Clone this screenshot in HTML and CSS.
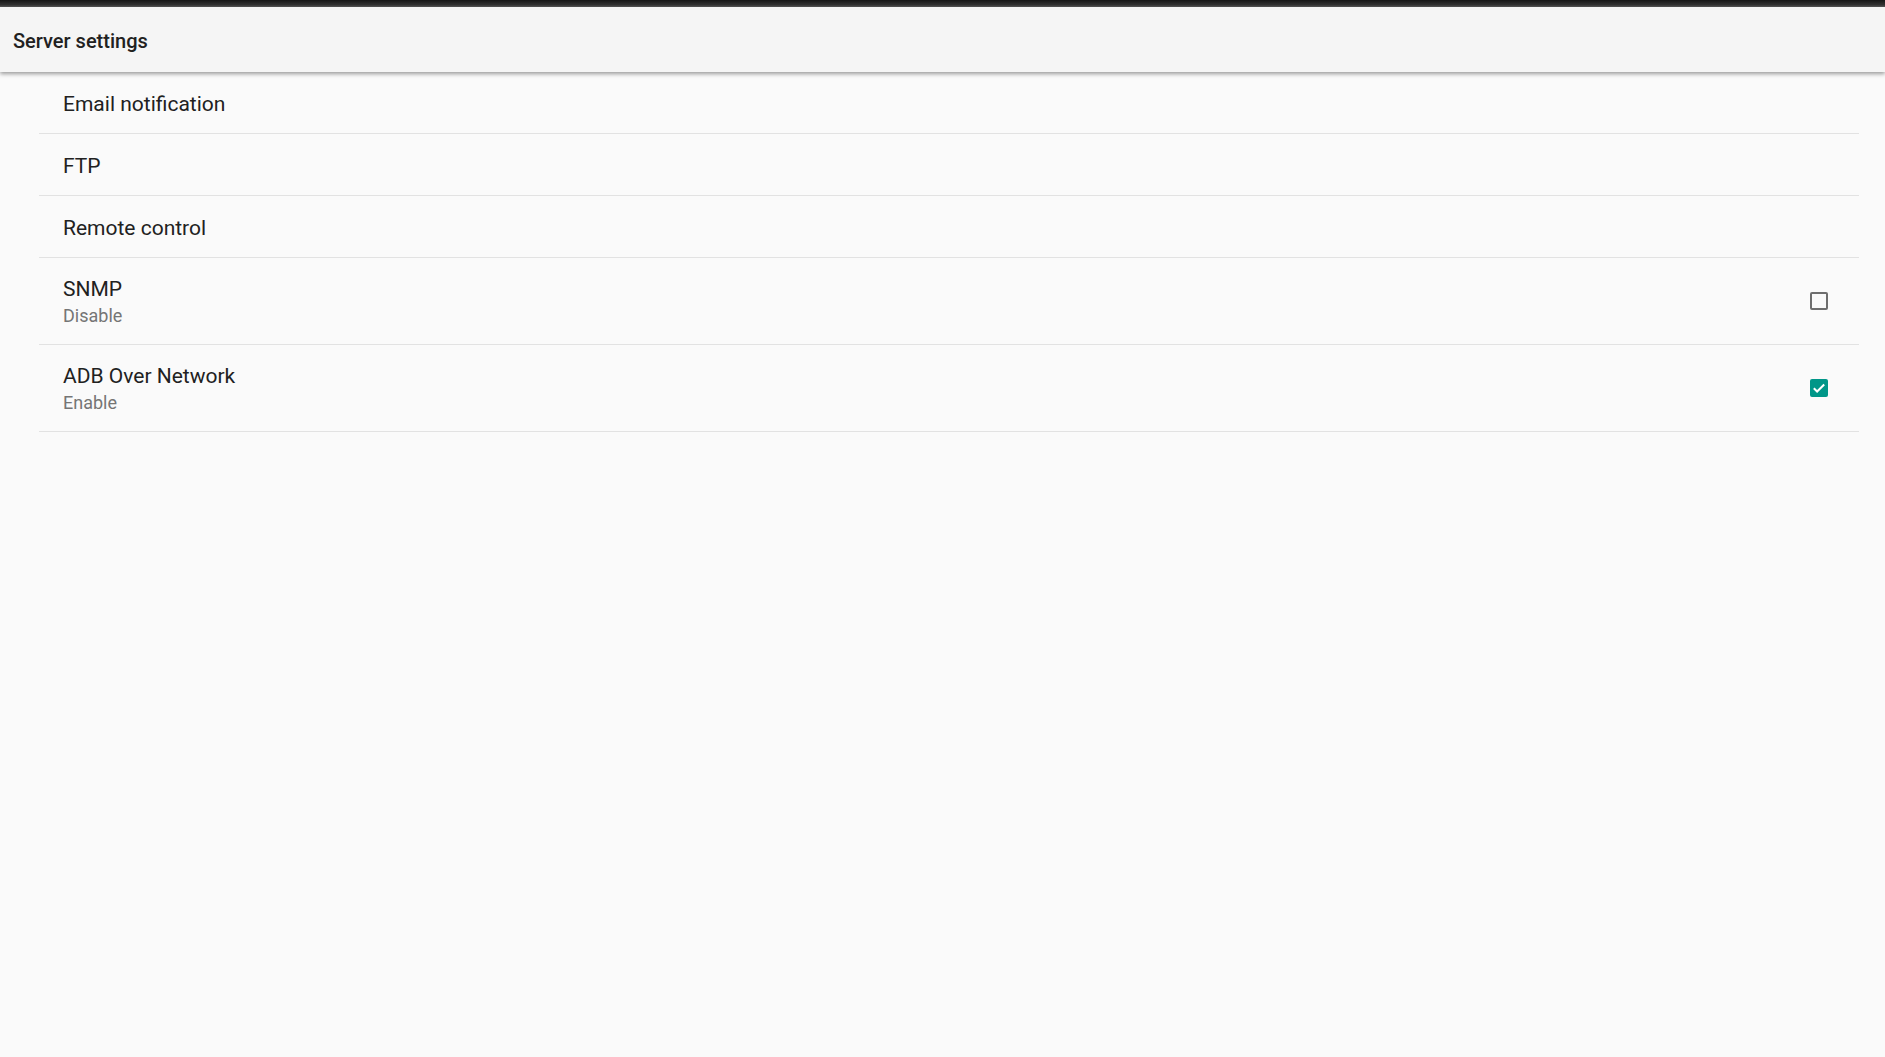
FILE: index.html
```html
<!DOCTYPE html>
<html>
<head>
<meta charset="utf-8">
<link rel="stylesheet" href="styles.css">
</head>
<body>
<div class="topstrip"></div>
<header class="appbar"><span class="title">Server settings</span></header>
<main class="list">
  <div class="row first"><div class="texts"><div class="primary">Email notification</div></div></div>
  <div class="row"><div class="texts"><div class="primary">FTP</div></div></div>
  <div class="row"><div class="texts"><div class="primary">Remote control</div></div></div>
  <div class="row tall"><div class="texts"><div class="primary">SNMP</div><div class="secondary">Disable</div></div><span class="cb"></span></div>
  <div class="row tall"><div class="texts"><div class="primary">ADB Over Network</div><div class="secondary">Enable</div></div><span class="cb on"><svg viewBox="0 0 18 18" width="18" height="18"><path d="M3.8 9.3l3.3 3.2L14.2 5.5" fill="none" stroke="#fff" stroke-width="2"/></svg></span></div>
</main>
</body>
</html>
```
FILE: styles.css
```css
html, body { margin: 0; padding: 0; }
body { background: #fafafa; font-family: Roboto, "Noto Sans", sans-serif; width: 1885px; height: 1057px; overflow: hidden; }
.topstrip { height: 7px; background: linear-gradient(#161616, #333 70%, #5a5a5a); }
.appbar { height: 65px; background: #f5f5f5; display: flex; align-items: center; padding-left: 13px; position: relative; z-index: 2; box-shadow: 0 2px 4px rgba(0,0,0,0.38); }
.title { font-size: 20px; font-weight: 500; color: #212121; position: relative; top: 1px; }
.list { margin-left: 39px; margin-right: 26px; }
.row { height: 61px; border-bottom: 1.5px solid #e2e2e2; display: flex; align-items: center; padding-left: 24px; padding-right: 31px; }
.row.tall { height: 86px; }
.texts { flex: 1; padding-top: 2px; }
.primary { font-size: 21px; color: #212121; line-height: 26px; }
.secondary { font-size: 18px; color: #757575; line-height: 27px; }
.cb { width: 14px; height: 14px; border: 2px solid #6e6e6e; border-radius: 2px; display: block; }
.cb.on { width: 18px; height: 18px; border: none; background: #009688; }
.cb svg { display: block; }
```
